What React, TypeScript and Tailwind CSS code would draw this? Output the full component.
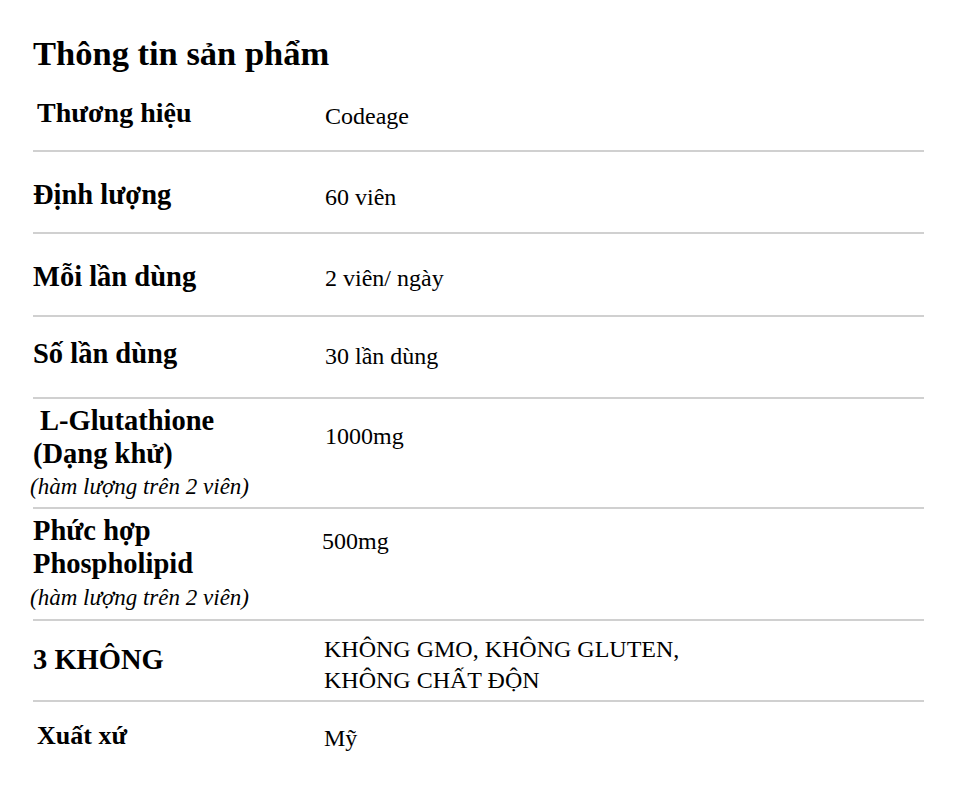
const serif = "font-['Liberation_Serif','Times_New_Roman',serif]";

type Row = {
  label: React.ReactNode;
  value: React.ReactNode;
  rowClass: string;
  labelClass: string;
  valueClass: string;
  last?: boolean;
};

const note = (
  <p className="mt-[1px] -ml-[3px] text-[23px] leading-[32px] italic font-normal">(hàm lượng trên 2 viên)</p>
);

const rows: Row[] = [
  {
    label: "Thương hiệu",
    value: "Codeage",
    rowClass: "h-[62px]",
    labelClass: "pt-[7px] pl-[4px] text-[28px]",
    valueClass: "pt-[10px] pl-[1px]",
  },
  {
    label: "Định lượng",
    value: "60 viên",
    rowClass: "h-[82px]",
    labelClass: "pt-[27px] text-[28.5px]",
    valueClass: "pt-[29px] pl-[1px]",
  },
  {
    label: "Mỗi lần dùng",
    value: "2 viên/ ngày",
    rowClass: "h-[83px]",
    labelClass: "pt-[27px] text-[28.5px]",
    valueClass: "pt-[28px] pl-[1px]",
  },
  {
    label: "Số lần dùng",
    value: "30 lần dùng",
    rowClass: "h-[82px]",
    labelClass: "pt-[21px] text-[28.5px]",
    valueClass: "pt-[23px] pl-[1px]",
  },
  {
    label: (
      <>
        <p className="leading-[33px] pl-[7px]">L-Glutathione</p>
        <p className="leading-[33px]">(Dạng khử)</p>
        {note}
      </>
    ),
    value: "1000mg",
    rowClass: "h-[110px]",
    labelClass: "pt-[5px] text-[28.5px]",
    valueClass: "pt-[21px] pl-[1px]",
  },
  {
    label: (
      <>
        <p className="leading-[33px]">Phức hợp</p>
        <p className="leading-[33px]">Phospholipid</p>
        <div className="mt-[2px]">{note}</div>
      </>
    ),
    value: "500mg",
    rowClass: "h-[112px]",
    labelClass: "pt-[5px] text-[28.5px]",
    valueClass: "pt-[16px] -ml-[2px]",
  },
  {
    label: "3 KHÔNG",
    value: (
      <>
        <p className="leading-[31px]">KHÔNG GMO, KHÔNG GLUTEN,</p>
        <p className="leading-[31px]">KHÔNG CHẤT ĐỘN</p>
      </>
    ),
    rowClass: "h-[81px]",
    labelClass: "pt-[23px] text-[28.5px]",
    valueClass: "pt-[13px]",
  },
  {
    label: "Xuất xứ",
    value: "Mỹ",
    rowClass: "h-[80px]",
    labelClass: "pt-[18px] pl-[4px] text-[26px]",
    valueClass: "pt-[20px]",
    last: true,
  },
];

export default function App() {
  return (
    <div className={`min-h-[807px] w-[954px] bg-white text-black ${serif}`}>
      <div className="px-[33px]">
        <div className="h-[90px] pt-[33px]">
          <h1 className="text-[34.5px] leading-[40px] font-bold">Thông tin sản phẩm</h1>
        </div>
        <div className="w-[891px]">
          {rows.map((r, i) => (
            <div
              key={i}
              className={[
                "flex",
                r.rowClass,
                r.last ? "" : "border-b-2 border-[#d0d0d0]",
              ].join(" ")}
            >
              <div className={`w-[291px] shrink-0 font-bold leading-[32px] ${r.labelClass}`}>
                {r.label}
              </div>
              <div className={`flex-1 text-[24px] leading-[32px] ${r.valueClass}`}>{r.value}</div>
            </div>
          ))}
        </div>
      </div>
    </div>
  );
}
